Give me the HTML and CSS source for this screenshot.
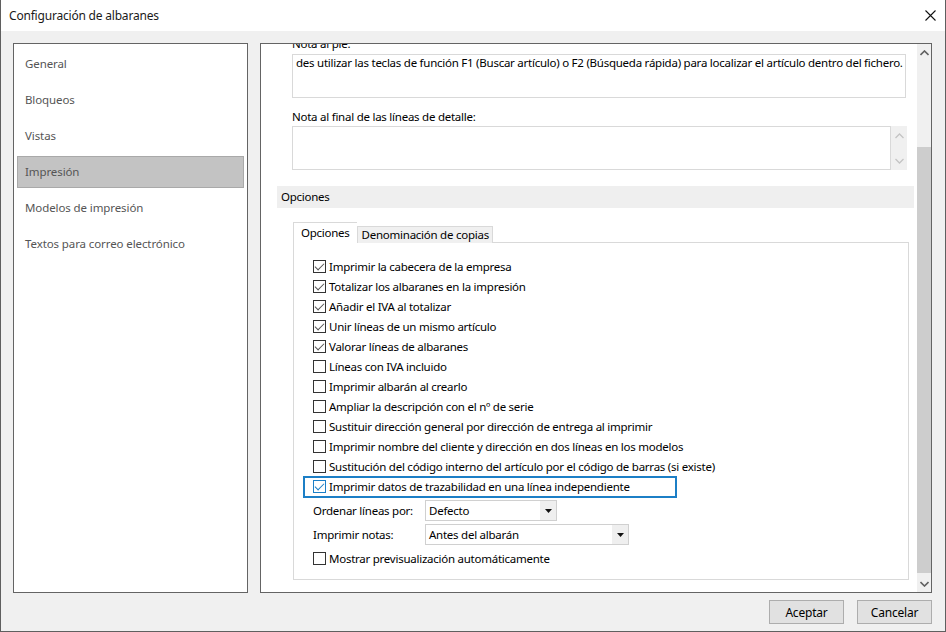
FILE: index.html
```html
<!DOCTYPE html>
<html lang="es">
<head>
<meta charset="utf-8">
<title>Configuración de albaranes</title>
<link rel="stylesheet" href="styles.css">
</head>
<body>
<div class="window">
  <div class="titlebar">
    <span class="title">Configuración de albaranes</span>
    <svg class="close" width="11" height="11" viewBox="0 0 11 11"><path d="M0.5 0.5 L10.5 10.5 M10.5 0.5 L0.5 10.5" stroke="#111" stroke-width="1.1" fill="none"/></svg>
  </div>
  <div class="body">
    <div class="main">
      <nav class="menu">
        <div class="menu-item">General</div>
        <div class="menu-item">Bloqueos</div>
        <div class="menu-item">Vistas</div>
        <div class="menu-item selected">Impresión</div>
        <div class="menu-item">Modelos de impresión</div>
        <div class="menu-item">Textos para correo electrónico</div>
      </nav>
      <section class="panel">
        <div class="viewport">
          <div class="content">
            <div class="notes">
              <div class="label">Nota al pie:</div>
              <div class="textarea ta1">des utilizar las teclas de función F1 (Buscar artículo) o F2 (Búsqueda rápida) para localizar el artículo dentro del fichero.</div>
              <div class="label label2">Nota al final de las líneas de detalle:</div>
              <div class="ta2-wrap">
                <div class="textarea ta2"></div>
                <div class="mini-scroll">
                  <svg width="9" height="6" viewBox="0 0 9 6"><polyline points="0.5,5 4.5,1 8.5,5" fill="none" stroke="#c4c4c4" stroke-width="1.3"/></svg>
                  <svg width="9" height="6" viewBox="0 0 9 6"><polyline points="0.5,1 4.5,5 8.5,1" fill="none" stroke="#c4c4c4" stroke-width="1.3"/></svg>
                </div>
              </div>
            </div>
            <div class="band">Opciones</div>
            <div class="tabs">
              <div class="tab-head">
                <div class="tab active">Opciones</div>
                <div class="tab">Denominación de copias</div>
              </div>
              <div class="tab-panel">
                <label class="row"><span class="cb checked"></span>Imprimir la cabecera de la empresa</label>
                <label class="row"><span class="cb checked"></span>Totalizar los albaranes en la impresión</label>
                <label class="row"><span class="cb checked"></span>Añadir el IVA al totalizar</label>
                <label class="row"><span class="cb checked"></span>Unir líneas de un mismo artículo</label>
                <label class="row"><span class="cb checked"></span>Valorar líneas de albaranes</label>
                <label class="row"><span class="cb"></span>Líneas con IVA incluido</label>
                <label class="row"><span class="cb"></span>Imprimir albarán al crearlo</label>
                <label class="row"><span class="cb"></span>Ampliar la descripción con el nº de serie</label>
                <label class="row"><span class="cb"></span>Sustituir dirección general por dirección de entrega al imprimir</label>
                <label class="row"><span class="cb"></span>Imprimir nombre del cliente y dirección en dos líneas en los modelos</label>
                <label class="row"><span class="cb"></span>Sustitución del código interno del artículo por el código de barras (si existe)</label>
                <label class="row focus"><span class="cb checked blue"></span>Imprimir datos de trazabilidad en una línea independiente</label>
                <div class="field first">
                  <span class="field-label">Ordenar líneas por:</span>
                  <div class="select short"><span class="select-value">Defecto</span><span class="select-btn"><svg width="7" height="4" viewBox="0 0 7 4"><polygon points="0,0 7,0 3.5,4" fill="#111"/></svg></span></div>
                </div>
                <div class="field">
                  <span class="field-label">Imprimir notas:</span>
                  <div class="select long"><span class="select-value">Antes del albarán</span><span class="select-btn"><svg width="7" height="4" viewBox="0 0 7 4"><polygon points="0,0 7,0 3.5,4" fill="#111"/></svg></span></div>
                </div>
                <label class="row last"><span class="cb"></span>Mostrar previsualización automáticamente</label>
              </div>
            </div>
          </div>
        </div>
        <div class="scrollbar">
          <div class="arrow"><svg width="9" height="6" viewBox="0 0 9 6"><polyline points="0.5,5 4.5,1 8.5,5" fill="none" stroke="#606060" stroke-width="1.6"/></svg></div>
          <div class="track"><div class="thumb"></div></div>
          <div class="arrow"><svg width="9" height="6" viewBox="0 0 9 6"><polyline points="0.5,1 4.5,5 8.5,1" fill="none" stroke="#606060" stroke-width="1.6"/></svg></div>
        </div>
      </section>
    </div>
    <div class="footer">
      <button class="btn">Aceptar</button>
      <button class="btn">Cancelar</button>
    </div>
  </div>
</div>
</body>
</html>
```
FILE: styles.css
```css
* { box-sizing: border-box; }
html, body { margin: 0; padding: 0; }
body {
  width: 946px;
  height: 632px;
  overflow: hidden;
  font-family: "Segoe UI", "Noto Sans", sans-serif;
  font-size: 11.5px;
  letter-spacing: -0.25px;
  color: #000;
  background: #fff;
}
.window {
  width: 946px;
  height: 632px;
  border: 1px solid #5f5f5f;
  border-top: none;
  display: flex;
  flex-direction: column;
}
.titlebar {
  height: 31px;
  background: #fff;
  display: flex;
  align-items: center;
  justify-content: space-between;
  padding: 0 9px 0 8px;
  flex: none;
}
.title { font-size: 12px; letter-spacing: -0.2px; color: #1a1a1a; }
.body {
  flex: 1;
  background: #f0f0f0;
  padding: 12px 13px 7px 12px;
  display: flex;
  flex-direction: column;
}
.main {
  height: 550px;
  display: flex;
  gap: 12px;
}
.menu {
  width: 235px;
  background: #fff;
  border: 1px solid #646464;
  padding: 4px 3px;
  display: flex;
  flex-direction: column;
  gap: 4px;
}
.menu-item {
  height: 32px;
  line-height: 29px;
  padding-left: 7px;
  border: 1px solid transparent;
  color: #555;
  letter-spacing: -0.1px;
}
.menu-item.selected {
  background: #c3c3c3;
  border-color: #a9a9a9;
}
.panel {
  width: 672px;
  background: #fff;
  border: 1px solid #646464;
  display: flex;
}
.viewport {
  flex: 1;
  overflow: hidden;
}
.content {
  margin-top: -8px;
  padding: 0 3px 0 16px;
}
.notes {
  padding: 0 8px 0 15px;
}
.label {
  height: 16px;
  line-height: 16px;
  margin-bottom: 2px;
  padding-left: 0;
}
.label2 {
  margin-top: 11px;
  margin-bottom: 1px;
}
.textarea {
  border: 1px solid #d9d9d9;
  background: #fff;
  height: 44px;
}
.ta1 {
  padding: 0 0 0 3px;
  line-height: 16px;
  white-space: nowrap;
  overflow: hidden;
}
.ta2-wrap {
  display: flex;
  height: 44px;
  margin-right: -1px;
}
.ta2 { flex: 1; }
.mini-scroll {
  width: 16px;
  background: #f0f0f0;
  display: flex;
  flex-direction: column;
  justify-content: space-between;
  align-items: center;
  padding: 7px 0 6px;
}
.band {
  margin-top: 16px;
  height: 22px;
  line-height: 22px;
  background: #efefef;
  padding-left: 4px;
}
.tabs {
  margin: 14px 5px 0 16px;
}
.tab-head {
  display: flex;
  align-items: flex-end;
  height: 21px;
  position: relative;
  z-index: 1;
}
.tab {
  border: 1px solid #d9d9d9;
  border-bottom: none;
  background: #f0f0f0;
  height: 17px;
  line-height: 16px;
  padding: 0 3px 0 4px;
}
.tab.active {
  background: #fff;
  height: 21px;
  line-height: 19px;
  padding: 0 7px;
  border-right: none;
}
.tab-panel {
  height: 338px;
  border: 1px solid #d9d9d9;
  margin-top: -1px;
  padding: 14px 0 0 10px;
  display: flex;
  flex-direction: column;
  align-items: flex-start;
}
.row {
  display: flex;
  align-items: center;
  height: 20px;
  padding-left: 9px;
  padding-bottom: 1px;
  white-space: nowrap;
}
.row.focus {
  width: 372px;
  outline: 2px solid #1c7fc6;
  outline-offset: -1px;
}
.row.last { margin-top: 4px; }
.cb {
  width: 13px;
  height: 13px;
  border: 1px solid #333;
  background: #fff;
  margin-right: 3px;
  flex: none;
  position: relative;
}
.cb.checked::after {
  content: "";
  position: absolute;
  left: 3px;
  top: 0px;
  width: 4px;
  height: 8px;
  border-right: 1.3px solid #555;
  border-bottom: 1.3px solid #555;
  transform: rotate(45deg);
}
.cb.blue { border-color: #1c7fc6; }
.cb.blue::after { border-color: #1c7fc6; }
.field {
  display: flex;
  align-items: center;
  height: 21px;
  margin-top: 3px;
  padding-left: 9px;
}
.field-label {
  width: 112px;
  line-height: 22px;
}
.select {
  height: 21px;
  border: 1px solid #d0d0d0;
  background: #fff;
  display: flex;
  align-items: stretch;
}
.select.short { width: 132px; }
.select.long { width: 204px; }
.select-value {
  flex: 1;
  padding-left: 3px;
  line-height: 20px;
}
.select-btn {
  width: 16px;
  background: #efefef;
  display: flex;
  align-items: center;
  justify-content: center;
}
.scrollbar {
  width: 14px;
  background: #f0f0f0;
  display: flex;
  flex-direction: column;
}
.arrow {
  height: 17px;
  display: flex;
  align-items: center;
  justify-content: center;
  flex: none;
}
.track {
  flex: 1;
  padding-top: 86px;
}
.thumb {
  height: 426px;
  background: #cdcdcd;
}
.footer {
  margin-top: 7px;
  display: flex;
  justify-content: flex-end;
  gap: 13px;
}
.btn {
  width: 75px;
  height: 24px;
  background: #e1e1e1;
  border: 1px solid #adadad;
  font-family: inherit;
  font-size: 12px;
  letter-spacing: -0.2px;
  color: #000;
  padding: 0;
}
```
